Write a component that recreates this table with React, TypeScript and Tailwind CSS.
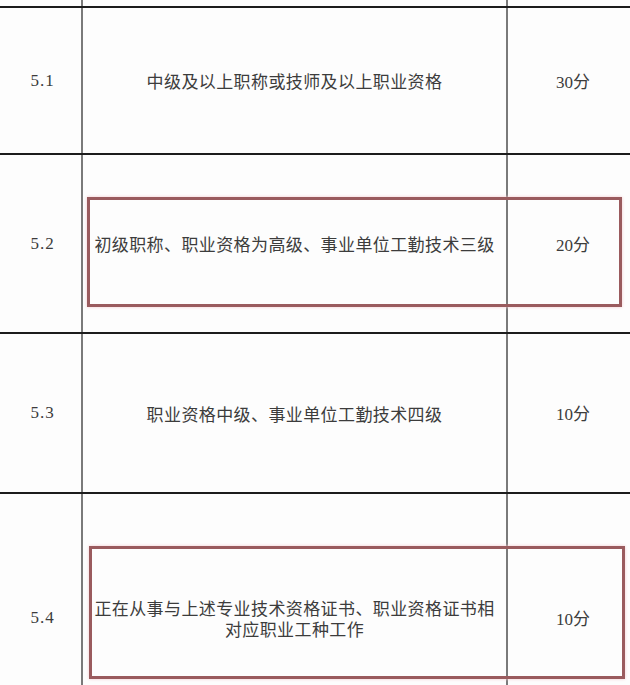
const rows = [
  { no: '5.1', text: ['中级及以上职称或技师及以上职业资格'], score: '30分', h: 'h-[147px]', box: null },
  { no: '5.2', text: ['初级职称、职业资格为高级、事业单位工勤技术三级'], score: '20分', h: 'h-[179px]', box: 'a' },
  { no: '5.3', text: ['职业资格中级、事业单位工勤技术四级'], score: '10分', h: 'h-[160px]', box: null },
  { no: '5.4', text: ['正在从事与上述专业技术资格证书、职业资格证书相', '对应职业工种工作'], score: '10分', h: 'h-[250px]', box: 'b' },
];

export default function App() {
  return (
    <div
      className="w-[630px] h-[685px] overflow-hidden bg-[#fdfdfd] text-[#3c3c3c]"
      style={{ fontFamily: '"Liberation Serif", "Noto Sans CJK SC", serif' }}
    >
      <div className="w-[642px]">
        {/* cut-off row above */}
        <div className="grid grid-cols-[83px_425px_1fr] h-[8px] border-b-2 border-[#1c1c1c]">
          <div className="border-r-2 border-[#7a7a7a]" />
          <div className="border-r-2 border-[#7a7a7a]" />
          <div />
        </div>
        {rows.map((r) => (
          <div key={r.no} className={`relative grid grid-cols-[83px_425px_1fr] border-b-2 border-[#1c1c1c] ${r.h}`}>
            <div className="flex items-center justify-center border-r-2 border-[#7a7a7a] text-[17px] pl-1 tracking-[1px]">
              {r.no}
            </div>
            <div className="flex flex-col items-center justify-center border-r-2 border-[#7a7a7a] text-[17px] leading-[21px] tracking-[0.4px] pt-1">
              {r.text.map((t) => (
                <span key={t}>{t}</span>
              ))}
            </div>
            <div className="flex items-center justify-center text-[17px] pt-1 pr-1">
              {r.score}
            </div>
            {r.box === 'a' && (
              <div className="absolute left-[87px] top-[42px] w-[535px] h-[110px] border-[3px] border-[#9a5b5e] shadow-[0_0_3px_#f3c9cc]" />
            )}
            {r.box === 'b' && (
              <div className="absolute left-[89px] top-[52px] w-[536px] h-[133px] border-[3px] border-[#9a5b5e] shadow-[0_0_3px_#f3c9cc]" />
            )}
          </div>
        ))}
      </div>
    </div>
  );
}
